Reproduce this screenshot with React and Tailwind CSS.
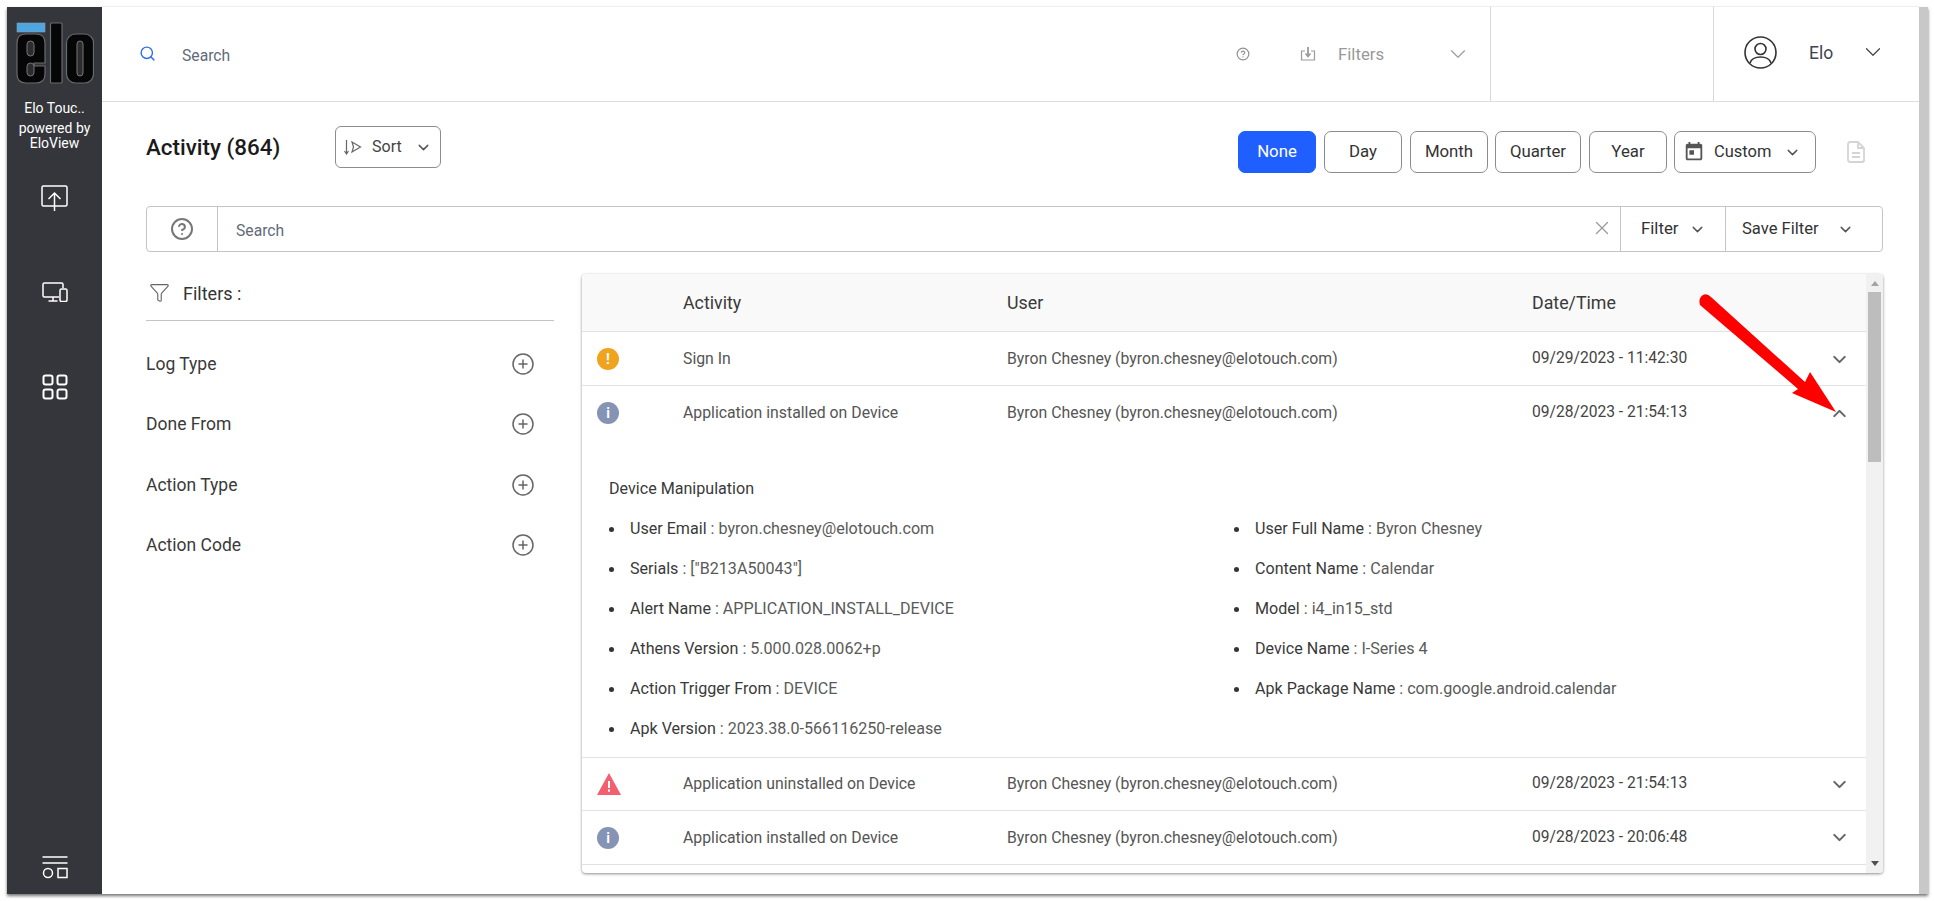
import React from 'react';
import { ChevronDown, ChevronUp, CircleHelp, CirclePlus, Search, X, Funnel } from 'lucide-react';

const EloLogo = () => (
  <svg width="78" height="62" viewBox="0 0 78 62">
    <rect x="1" y="1" width="28" height="9" fill="#4fa5e0" stroke="#7f9fb5" strokeWidth="0.6" />
    <path d="M10 12H20Q29 12 29 21V41H18V44H29V52Q29 61 20 61H10Q1 61 1 52V21Q1 12 10 12Z" fill="#060606" stroke="#6a6a6e" strokeWidth="1.2" />
    <rect x="11" y="19" width="7" height="15" rx="3.5" fill="#2c2c2e" stroke="#77777a" />
    <rect x="11" y="41" width="7" height="13" rx="3.5" fill="#2c2c2e" stroke="#77777a" />
    <rect x="34.5" y="1" width="11.5" height="60" rx="1" fill="#060606" stroke="#6a6a6e" strokeWidth="1.2" />
    <rect x="50.5" y="12" width="27" height="49" rx="9" fill="#060606" stroke="#6a6a6e" strokeWidth="1.2" />
    <rect x="61" y="19" width="6" height="35" rx="3" fill="#2c2c2e" stroke="#77777a" />
  </svg>
);

const UploadIcon = () => (
  <svg width="27" height="26" viewBox="0 0 27 26" fill="none" stroke="#fff" strokeWidth="1.5">
    <rect x="1" y="1" width="25" height="20" rx="1.5" />
    <path d="M13.5 26V8M7.5 14 13.5 8l6 6" />
  </svg>
);

const DevicesIcon = () => (
  <svg width="26" height="20" viewBox="0 0 26 20" fill="none" stroke="#fff" strokeWidth="1.5">
    <path d="M17 15H2.500A1.500 1.500 0 0 1 1 13.500V2.500A1.500 1.500 0 0 1 2.500 1H19.500A1.500 1.500 0 0 1 21 2.500V6" />
    <path d="M11 15V19M6.500 19H15.500" />
    <rect x="18" y="7" width="7" height="12.500" rx="1.500" />
  </svg>
);

const GridIcon = () => (
  <svg width="26" height="26" viewBox="0 0 26 26" fill="none" stroke="#fff" strokeWidth="2">
    <rect x="1.500" y="1.500" width="9" height="9" rx="2" />
    <rect x="15.500" y="1.500" width="9" height="9" rx="2" />
    <rect x="1.500" y="15.500" width="9" height="9" rx="2" />
    <rect x="15.500" y="15.500" width="9" height="9" rx="2" />
  </svg>
);

const SettingsIcon = () => (
  <svg width="26" height="23" viewBox="0 0 26 23" fill="none" stroke="#fff" strokeWidth="1.5">
    <path d="M0.500 1H25.500M0.500 7H25.500" />
    <circle cx="6" cy="17" r="4.500" />
    <rect x="16" y="12.500" width="9" height="9" />
  </svg>
);

const SortIcon = () => (
  <svg width="18" height="16" viewBox="0 0 18 16" fill="none" stroke="#666" strokeWidth="1.200">
    <path d="M2.500 1V14.500M0.500 12 2.500 15 4.500 12" />
    <path d="M8 3 16.500 8 8 13 9.500 8Z" />
  </svg>
);

const DownloadBox = () => (
  <svg width="16" height="14" viewBox="0 0 16 14" fill="none" stroke="#9a9a9a" strokeWidth="1.200">
    <path d="M5 4H1.500V13H14.500V4H11" />
    <path d="M8 0V9" strokeWidth="1.800" />
    <path d="M5.500 6.500 8 9.500 10.500 6.500" strokeWidth="1.500" />
  </svg>
);

const AvatarIcon = () => (
  <svg width="33" height="33" viewBox="0 0 33 33" fill="none" stroke="#333" strokeWidth="1.600">
    <circle cx="16.500" cy="16.500" r="15.500" />
    <circle cx="16.500" cy="13" r="5.500" />
    <path d="M6 27C7.500 22.500 11 21 16.500 21S25.500 22.500 27 27" />
  </svg>
);

const CalendarIcon = () => (
  <svg width="22" height="22" viewBox="0 0 24 24" fill="#555">
    <path d="M19 3h-1V1h-2v2H8V1H6v2H5c-1.110 0-1.990.9-1.990 2L3 19c0 1.100.89 2 2 2h14c1.100 0 2-.9 2-2V5c0-1.100-.9-2-2-2zm0 16H5V8h14v11zM7 10h5v5H7z" />
  </svg>
);

const DocIcon = () => (
  <svg width="20" height="22" viewBox="0 0 20 22" fill="none" stroke="#d4d4d4" strokeWidth="1.800">
    <path d="M2 3A2 2 0 0 1 4 1H12L18 7V19A2 2 0 0 1 16 21H4A2 2 0 0 1 2 19Z" />
    <path d="M12 1V7H18M6 12H14M6 16H14" />
  </svg>
);

const WarnBadge = () => (
  <svg width="24" height="22" viewBox="0 0 24 22">
    <path d="M12 0 24 22H0Z" fill="#f25f6f" />
    <rect x="11" y="8" width="2" height="7" fill="#fff" />
    <rect x="11" y="16.500" width="2" height="2.200" fill="#fff" />
  </svg>
);

const RoundBadge = ({ color, mark }) => (
  <div className={`w-[22px] h-[22px] rounded-full flex items-center justify-center text-white font-bold text-[14px] leading-none ${color}`}>
    {mark}
  </div>
);

const rangeBtns = [
  ['None', 'w-[78px] bg-[#1f5fff] border-[#1f5fff] text-white'],
  ['Day', 'w-[78px] bg-white border-[#8c8c8c] text-[#333]'],
  ['Month', 'w-[78px] bg-white border-[#8c8c8c] text-[#333]'],
  ['Quarter', 'w-[86px] -ml-[1px] bg-white border-[#8c8c8c] text-[#333]'],
  ['Year', 'w-[78px] bg-white border-[#8c8c8c] text-[#333]'],
];

const filterGroups = ['Log Type', 'Done From', 'Action Type', 'Action Code'];

const details = [
  ['User Email', 'byron.chesney@elotouch.com'],
  ['User Full Name', 'Byron Chesney'],
  ['Serials', '["B213A50043"]'],
  ['Content Name', 'Calendar'],
  ['Alert Name', 'APPLICATION_INSTALL_DEVICE'],
  ['Model', 'i4_in15_std'],
  ['Athens Version', '5.000.028.0062+p'],
  ['Device Name', 'I-Series 4'],
  ['Action Trigger From', 'DEVICE'],
  ['Apk Package Name', 'com.google.android.calendar'],
  ['Apk Version', '2023.38.0-566116250-release'],
];

const Row = ({ badge, activity, date, open, height }) => (
  <div className={`flex items-center text-[15.800px] text-[#555] ${height}`}>
    <div className="w-[101px] pl-[15px] flex items-center">{badge}</div>
    <div className="w-[324px]">{activity}</div>
    <div className="w-[525px]">Byron Chesney (byron.chesney@elotouch.com)</div>
    <div className="w-[297px] text-[15.600px] text-[#444]">{date}</div>
    {open ? <ChevronUp size={21} color="#666" strokeWidth={2.400} /> : <ChevronDown size={21} color="#666" strokeWidth={2.400} />}
  </div>
);

export default function App() {
  return (
    <div className="h-screen overflow-hidden bg-white pt-[7px] pl-[7px] font-[Roboto,sans-serif]">
      <div className="relative flex w-[1921px] h-[887px] shadow-[0_2px_3px_rgba(0,0,0,0.55)]">
        <aside className="w-[95px] shrink-0 bg-[#35363b] flex flex-col items-center text-white">
          <div className="mt-[15px] ml-[1px]"><EloLogo /></div>
          <div className="mt-[14px] text-[14px] leading-[20px]">Elo Touc..</div>
          <div className="w-full text-center text-[14px] leading-[15px] pt-[3px]">powered by<br />EloView</div>
          <div className="mt-[34px]"><UploadIcon /></div>
          <div className="mt-[71px]"><DevicesIcon /></div>
          <div className="mt-[72px]"><GridIcon /></div>
          <div className="mt-auto mb-[15px]"><SettingsIcon /></div>
        </aside>

        <main className="flex-1 flex flex-col min-w-0 bg-white">
          <header className="h-[95px] shrink-0 flex border-b border-[#dedede] shadow-[0_-1px_0_#eee]">
            <div className="flex-1 flex items-center pl-[37px]">
              <Search size={17} color="#2f6fe8" className="mb-[2px]" />
              <span className="ml-[26px] mt-[3px] text-[15.700px] text-[#5f6b78]">Search</span>
              <CircleHelp size={14} color="#8f8f8f" className="ml-auto" />
              <div className="ml-[50px]"><DownloadBox /></div>
              <span className="ml-[22px] mt-[1px] w-[107px] text-[16.800px] text-[#9a9a9a]">Filters</span>
              <ChevronDown size={26} color="#9a9a9a" strokeWidth={1} />
              <div className="w-[19px]" />
            </div>
            <div className="w-[223px] border-l border-[#d8d8d8]" />
            <div className="w-[206px] border-l border-[#d8d8d8] flex items-center pl-[30px] pb-[3px]">
              <AvatarIcon />
              <span className="ml-[32px] mt-[1px] text-[17.500px] text-[#3d4650]">Elo</span>
              <ChevronDown size={26} color="#444" strokeWidth={1.100} className="ml-[27px] mb-[1px]" />
            </div>
          </header>

          <div className="flex-1 min-h-0 pl-[44px] pr-[36px] flex flex-col">
            <div className="h-[104px] shrink-0 flex items-start">
              <h1 className="mt-[32px] w-[189px] text-[22.400px] leading-[26px] font-medium text-[#1b1b1b]">Activity (864)</h1>
              <button type="button" className="mt-[24px] w-[106px] h-[42px] border border-[#8c8c8c] rounded-[6px] flex items-center pl-[8px] text-[16px] text-[#444]">
                <SortIcon />
                <span className="ml-[10px]">Sort</span>
                <ChevronDown size={17} color="#555" className="ml-[13px]" />
              </button>
              <div className="ml-auto mt-[29px] flex items-center gap-[8px]">
                {rangeBtns.map(([label, cls]) => (
                  <button key={label} type="button" className={`h-[42px] border rounded-[7px] text-[16.800px] ${cls}`}>{label}</button>
                ))}
                <button type="button" className="w-[142px] h-[42px] -ml-[1px] bg-white border border-[#8c8c8c] rounded-[7px] flex items-center pl-[8px] text-[16.500px] text-[#333]">
                  <CalendarIcon />
                  <span className="ml-[9px]">Custom</span>
                  <ChevronDown size={17} color="#555" className="ml-[13px]" />
                </button>
                <div className="ml-[22px] mr-[17px]"><DocIcon /></div>
              </div>
            </div>

            <div className="h-[46px] shrink-0 flex items-center border border-[#c4c4c4] rounded-[4px]">
              <div className="w-[71px] h-full border-r border-[#c4c4c4] flex items-center justify-center">
                <CircleHelp size={24} color="#777" strokeWidth={2} />
              </div>
              <span className="ml-[18px] mt-[4px] text-[15.700px] text-[#5f6b78]">Search</span>
              <X size={22} color="#9a9a9a" strokeWidth={1.400} className="ml-auto mr-[7px] mb-[3px]" />
              <div className="w-[105px] h-full border-l border-[#c4c4c4] flex items-center pl-[20px] text-[16.800px] text-[#333]">
                Filter
                <ChevronDown size={17} color="#555" className="ml-[10px]" />
              </div>
              <div className="w-[157px] h-full border-l border-[#c4c4c4] flex items-center pl-[16px] text-[16.600px] text-[#333]">
                Save Filter
                <ChevronDown size={17} color="#555" className="ml-[18px]" />
              </div>
            </div>

            <div className="flex mt-[22px] gap-[28px]">
              <section className="w-[408px] shrink-0">
                <div className="h-[47px] border-b border-[#c4c4c4] flex items-start pl-[3px] pt-[8px]">
                  <Funnel size={21} color="#666" strokeWidth={1.300} />
                  <span className="ml-[13px] text-[18px] leading-[24px] text-[#333]">Filters :</span>
                </div>
                <div className="mt-[13px]">
                  {filterGroups.map((name) => (
                    <div key={name} className="h-[60.300px] flex items-center justify-between pr-[19px] text-[17.500px] text-[#3a3a3a]">
                      {name}
                      <CirclePlus size={24} color="#666" strokeWidth={1.500} />
                    </div>
                  ))}
                </div>
              </section>

              <section className="relative flex-1 h-[599px] flex rounded-[4px] overflow-hidden shadow-[0_1px_3px_rgba(0,0,0,0.45)]">
                <div className="flex-1 min-w-0 divide-y divide-[#e2e2e2]">
                  <div className="flex items-center h-[58px] pt-[2px] bg-[#f9f9f9] text-[17.800px] text-[#3a3a3a]">
                    <div className="w-[101px]" />
                    <div className="w-[324px]">Activity</div>
                    <div className="w-[525px]">User</div>
                    <div>Date/Time</div>
                  </div>
                  <Row height="h-[54px] pt-[1px]" badge={<RoundBadge color="bg-[#f0a31e]" mark="!" />} activity="Sign In" date="09/29/2023 - 11:42:30" />
                  <div>
                    <Row height="h-[54px]" badge={<RoundBadge color="bg-[#8593b5]" mark="i" />} activity="Application installed on Device" date="09/28/2023 - 21:54:13" open />
                    <div className="pl-[27px] pt-[37px] pb-[8px] text-[16.100px]">
                      <h3 className="h-[24px] mb-[8px] leading-[24px] text-[#3a3a3a]">Device Manipulation</h3>
                      <ul className="grid grid-cols-[625px_1fr]">
                        {details.map(([k, v]) => (
                          <li key={k} className="h-[40px] flex items-center text-[#5a5a5a]">
                            <span className="w-[5px] h-[5px] rounded-full bg-[#333] mr-[16px]" />
                            <span className="text-[#3a3a3a]">{k}</span>&nbsp;:&nbsp;{v}
                          </li>
                        ))}
                      </ul>
                    </div>
                  </div>
                  <Row height="h-[53px]" badge={<WarnBadge />} activity="Application uninstalled on Device" date="09/28/2023 - 21:54:13" />
                  <Row height="h-[54px]" badge={<RoundBadge color="bg-[#8593b5]" mark="i" />} activity="Application installed on Device" date="09/28/2023 - 20:06:48" />
                  <div />
                </div>
                <div className="relative w-[17px] shrink-0 bg-[#f1f1f1] flex flex-col items-center">
                  <div className="mt-[7px] w-0 h-0 border-x-[4px] border-x-transparent border-b-[5px] border-b-[#a3a3a3]" />
                  <div className="mt-[6px] w-[13px] h-[170px] bg-[#bdbdbd]" />
                  <div className="mt-auto mb-[7px] w-0 h-0 border-x-[4px] border-x-transparent border-t-[5px] border-t-[#505050]" />
                </div>
              </section>
            </div>
          </div>
        </main>

        <div className="w-[9px] shrink-0 bg-[#c8c8c8]" />

        <svg className="absolute left-[1690px] top-[285px]" width="145" height="125" viewBox="0 0 145 125" fill="#ff0000">
          <path d="M3 13Q1 6 6 3 10 1 14 5L108 90 113 80 139 120 95 101 101 97Z" />
        </svg>
      </div>
    </div>
  );
}
